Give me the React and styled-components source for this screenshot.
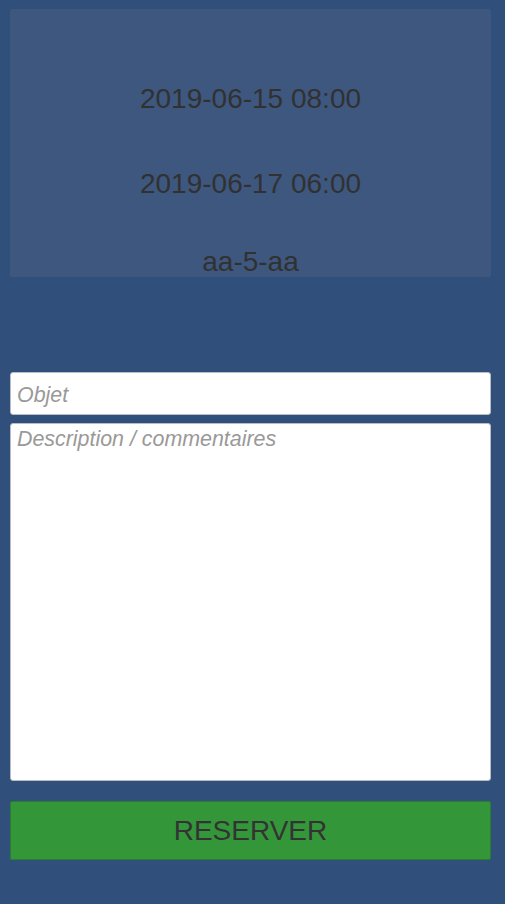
import React from "react";
import styled, { createGlobalStyle } from "styled-components";

const GlobalStyle = createGlobalStyle`
  html, body {
    margin: 0;
    padding: 0;
    background: #314f7b;
  }
  body {
    font-family: "Liberation Sans", Arial, sans-serif;
  }
`;

const Page = styled.div`
  width: 505px;
  height: 904px;
  box-sizing: border-box;
  padding: 9px 14px 0 10px;
  display: flex;
  flex-direction: column;
  background: #314f7b;
`;

const Summary = styled.div`
  height: 268px;
  background: #3e577f;
  border-radius: 2px;
  overflow: hidden;
  display: flex;
  flex-direction: column;
  align-items: center;
`;

const Line = styled.div`
  margin-top: ${(p) => p.$offset}px;
  height: 32px;
  line-height: 32px;
  font-size: 28px;
  color: #313131;
  white-space: nowrap;
`;

const Form = styled.div`
  margin-top: 95px;
  display: flex;
  flex-direction: column;
`;

const field = `
  box-sizing: border-box;
  width: 100%;
  background: #fff;
  border: 1px solid #b8bcc4;
  border-radius: 3px;
  font-family: "Liberation Sans", Arial, sans-serif;
  font-size: 21.4px;
  font-style: italic;
  color: #333;
  outline: none;
  &::placeholder {
    color: #999;
    font-style: italic;
  }
`;

const Subject = styled.input`
  ${field}
  height: 43px;
  padding: 3px 6px 0;
`;

const Comment = styled.textarea`
  ${field}
  margin-top: 8px;
  height: 358px;
  padding: 3px 6px;
  resize: none;
  line-height: 24px;
`;

const Submit = styled.button`
  margin-top: 20px;
  height: 59px;
  width: 100%;
  background: #33973a;
  border: 1px solid #2b7d31;
  border-radius: 2px;
  font-family: "Liberation Sans", Arial, sans-serif;
  font-size: 28px;
  color: #333;
  cursor: pointer;
  padding: 0;
`;

export default function App() {
  return (
    <>
      <GlobalStyle />
      <Page>
        <Summary>
          <Line $offset={74}>2019-06-15 08:00</Line>
          <Line $offset={53}>2019-06-17 06:00</Line>
          <Line $offset={46}>aa-5-aa</Line>
        </Summary>
        <Form>
          <Subject placeholder="Objet" />
          <Comment placeholder="Description / commentaires" />
          <Submit>RESERVER</Submit>
        </Form>
      </Page>
    </>
  );
}
